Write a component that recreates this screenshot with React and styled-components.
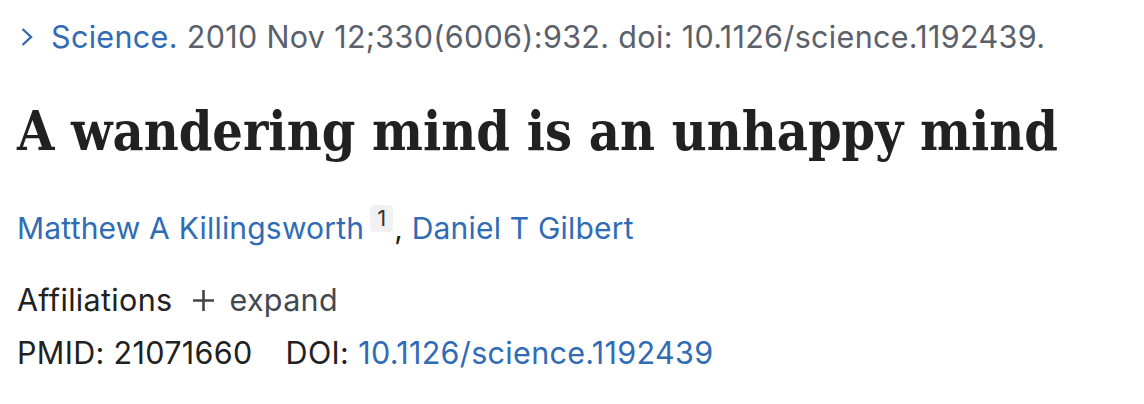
import React from "react";
import styled, { createGlobalStyle } from "styled-components";

const GlobalStyle = createGlobalStyle`
  html, body {
    margin: 0;
    padding: 0;
    background: #ffffff;
  }
  body {
    font-family: Inter, "Liberation Sans", Arial, sans-serif;
    color: #212121;
  }
`;

const Page = styled.main`
  padding: 18px 17px 0 17px;
`;

const Citation = styled.div`
  display: flex;
  align-items: center;
  gap: 18px;
  padding-left: 4px;
  font-size: 30.5px;
  letter-spacing: 0.33px;
  line-height: 38px;
  color: #5b616b;
`;

const Chevron = styled.svg`
  width: 12px;
  height: 20px;
  flex-shrink: 0;
`;

const Link = styled.a`
  color: #2f6cb5;
  text-decoration: none;
`;

const Title = styled.h1`
  margin: 44px 0 0 0;
  font-family: "DejaVu Serif", "Liberation Serif", serif;
  font-stretch: condensed;
  font-weight: 700;
  font-size: 53.5px;
  line-height: 64px;
  color: #212121;
`;

const Authors = styled.div`
  margin-top: 41px;
  font-size: 30px;
  letter-spacing: 0.2px;
  line-height: 38px;
`;

const Affil = styled.sup`
  display: inline-block;
  box-sizing: border-box;
  width: 23px;
  margin-left: 6px;
  margin-right: 1px;
  text-align: center;
  background: #f1f1f1;
  border-radius: 4px;
  font-size: 22px;
  letter-spacing: 0;
  line-height: 27px;
  vertical-align: 13px;
  color: #333;
`;

const Comma = styled.span`
  color: #212121;
`;

const Row = styled.div`
  display: flex;
  align-items: center;
  font-size: 30.5px;
  letter-spacing: 0.33px;
  line-height: 38px;
  color: #212121;
  margin-top: ${(p) => p.$mt || 0}px;
`;

const Expand = styled.span`
  display: inline-flex;
  align-items: center;
  gap: 14px;
  margin-left: 20px;
  color: #444950;
`;

const Plus = styled.svg`
  width: 23px;
  height: 23px;
`;

const Gap = styled.span`
  display: inline-block;
  width: 33px;
`;

export default function App() {
  return (
    <>
      <GlobalStyle />
      <Page>
        <Citation>
          <Chevron viewBox="0 0 12 20">
            <path d="M1.5 2 L10 10 L1.5 18" fill="none" stroke="#2f6cb5" strokeWidth="2.4" />
          </Chevron>
          <span>
            <Link href="#">Science.</Link> 2010 Nov 12;330(6006):932. doi: 10.1126/science.1192439.
          </span>
        </Citation>
        <Title>A wandering mind is an unhappy mind</Title>
        <Authors>
          <Link href="#">Matthew A Killingsworth</Link>
          <Affil>1</Affil>
          <Comma>, </Comma>
          <Link href="#">Daniel T Gilbert</Link>
        </Authors>
        <Row $mt={34}>
          Affiliations
          <Expand>
            <Plus viewBox="0 0 23 23">
              <path d="M11.5 1 V22 M1 11.5 H22" stroke="#444" strokeWidth="2.6" />
            </Plus>
            expand
          </Expand>
        </Row>
        <Row $mt={15}>
          PMID: 21071660
          <Gap />
          DOI:&nbsp;<Link href="#">10.1126/science.1192439</Link>
        </Row>
      </Page>
    </>
  );
}
